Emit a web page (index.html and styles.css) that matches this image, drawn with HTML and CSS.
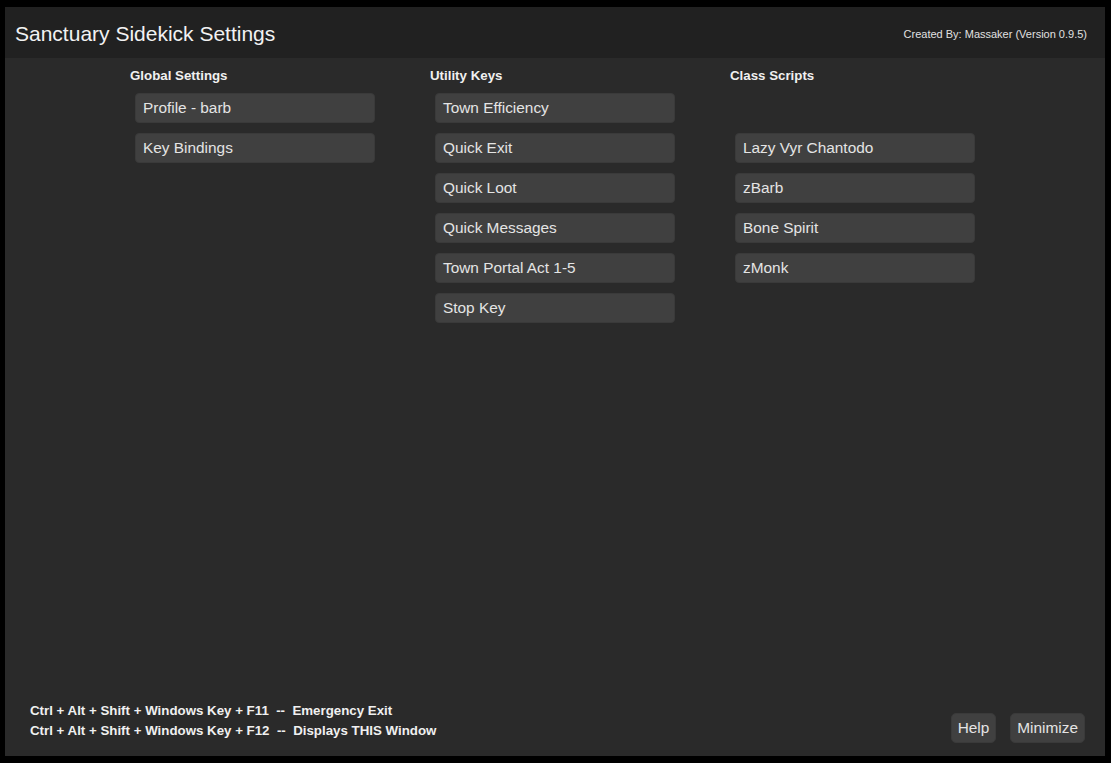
FILE: index.html
```html
<!DOCTYPE html>
<html>
<head>
<meta charset="utf-8">
<title>Sanctuary Sidekick Settings</title>
<link rel="stylesheet" href="styles.css">
</head>
<body>
<div class="window">
  <div class="titlebar">
    <div class="title">Sanctuary Sidekick Settings</div>
    <div class="credit">Created By: Massaker (Version 0.9.5)</div>
  </div>
  <div class="content">
    <div class="column">
      <div class="col-head">Global Settings</div>
      <div class="btn-list">
        <div class="btn">Profile - barb</div>
        <div class="btn">Key Bindings</div>
      </div>
    </div>
    <div class="column">
      <div class="col-head">Utility Keys</div>
      <div class="btn-list">
        <div class="btn">Town Efficiency</div>
        <div class="btn">Quick Exit</div>
        <div class="btn">Quick Loot</div>
        <div class="btn">Quick Messages</div>
        <div class="btn">Town Portal Act 1-5</div>
        <div class="btn">Stop Key</div>
      </div>
    </div>
    <div class="column">
      <div class="col-head">Class Scripts</div>
      <div class="btn-list">
        <div class="btn-spacer"></div>
        <div class="btn">Lazy Vyr Chantodo</div>
        <div class="btn">zBarb</div>
        <div class="btn">Bone Spirit</div>
        <div class="btn">zMonk</div>
      </div>
    </div>
  </div>
  <div class="footer">
    <div class="hotkeys">
      <div class="hotkey">Ctrl + Alt + Shift + Windows Key + F11&nbsp; --&nbsp; Emergency Exit</div>
      <div class="hotkey">Ctrl + Alt + Shift + Windows Key + F12&nbsp; --&nbsp; Displays THIS Window</div>
    </div>
    <div class="actions">
      <div class="small-btn">Help</div>
      <div class="small-btn">Minimize</div>
    </div>
  </div>
</div>
</body>
</html>
```
FILE: styles.css
```css
html, body {
  margin: 0;
  padding: 0;
  background: #000;
}
body {
  padding: 7px 6px 7px 5px;
  font-family: "Liberation Sans", Arial, sans-serif;
  color: #e6e6e6;
}
.window {
  width: 1100px;
  height: 749px;
  background: #2a2a2a;
  display: flex;
  flex-direction: column;
}
.titlebar {
  height: 51px;
  background: #212121;
  display: flex;
  align-items: center;
  justify-content: space-between;
  padding: 0 18px 0 10px;
  flex: none;
}
.title {
  font-size: 21px;
  color: #f2f2f2;
  position: relative;
  top: 1px;
}
.credit {
  font-size: 11px;
  color: #e0e0e0;
  position: relative;
  top: 1px;
}
.content {
  flex: 1;
  display: flex;
  padding: 10px 0 0 125px;
}
.column {
  width: 300px;
}
.col-head {
  font-size: 13.3px;
  font-weight: bold;
  line-height: 16px;
  color: #f0f0f0;
  margin-bottom: 9px;
}
.btn-list {
  display: flex;
  flex-direction: column;
  gap: 10px;
  padding-left: 5px;
}
.btn, .btn-spacer {
  width: 240px;
  height: 30px;
  box-sizing: border-box;
}
.btn {
  background: #404040;
  border: 1px solid #3a3a3a;
  border-radius: 4px;
  font-size: 15.4px;
  line-height: 28px;
  padding-left: 7px;
  color: #e4e4e4;
}
.footer {
  flex: none;
  display: flex;
  justify-content: space-between;
  align-items: flex-end;
  padding: 0 20px 13px 25px;
}
.hotkeys {
  margin-bottom: 2px;
}
.hotkey {
  font-size: 13.3px;
  font-weight: bold;
  line-height: 20px;
  color: #f0f0f0;
  white-space: pre;
}
.actions {
  display: flex;
  gap: 14px;
}
.small-btn {
  height: 30px;
  box-sizing: border-box;
  background: #404040;
  border: 1px solid #3a3a3a;
  border-radius: 5px;
  font-size: 15.4px;
  line-height: 28px;
  padding: 0 6px;
  color: #e4e4e4;
}
```
